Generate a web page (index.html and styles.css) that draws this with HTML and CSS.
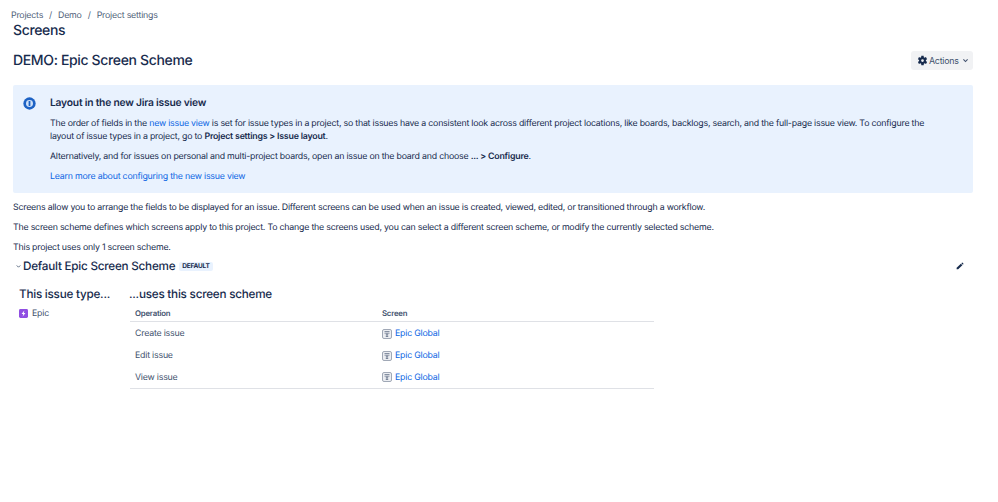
FILE: index.html
```html
<!DOCTYPE html>
<html lang="en">
<head>
<meta charset="utf-8">
<title>Screens</title>
<link rel="stylesheet" href="styles.css">
</head>
<body>
<nav class="crumbs"><span>Projects</span><i>/</i><span>Demo</span><i>/</i><span>Project settings</span></nav>
<main class="page">
  <h1 class="title">Screens</h1>
  <div class="head-row">
    <h2 class="scheme-title">DEMO: Epic Screen Scheme</h2>
    <button class="actions">
      <svg class="gear" viewBox="0 0 24 24"><path fill="#172b4d" fill-rule="evenodd" d="M19.4 13a7.6 7.6 0 0 0 0-2l2.6-2-2.500-4.400-3 1.200a7.300 7.300 0 0 0-1.700-1L14.500 1.500h-5L9 4.800a7.300 7.300 0 0 0-1.700 1l-3-1.200L2 9l2.600 2a7.600 7.600 0 0 0 0 2L2 15l2.300 4.400 3-1.200a7.300 7.300 0 0 0 1.700 1l.5 3.300h5l.5-3.300a7.300 7.300 0 0 0 1.700-1l3 1.200L22 15zM12 15a3 3 0 1 1 0-6 3 3 0 0 1 0 6z"/></svg>
      <span>Actions</span>
      <svg class="chev" viewBox="0 0 10 10"><path d="M2 3.500l3 3 3-3" fill="none" stroke="#42526e" stroke-width="1.600"/></svg>
    </button>
  </div>
  <section class="notice">
    <svg class="info" viewBox="0 0 16 16"><circle cx="8" cy="8" r="7.600" fill="#1d62c4"/><circle cx="8" cy="8" r="4.300" fill="#cfe1f8"/><rect x="6.900" y="4.800" width="2.200" height="6.400" rx=".8" fill="#1d62c4"/></svg>
    <div class="notice-body">
      <h3>Layout in the new Jira issue view</h3>
      <p>The order of fields in the <a href="#">new issue view</a> is set for issue types in a project, so that issues have a consistent look across different project locations, like boards, backlogs, search, and the full-page issue view. To configure the layout of issue types in a project, go to <b>Project settings &gt; Issue layout</b>.</p>
      <p>Alternatively, and for issues on personal and multi-project boards, open an issue on the board and choose <b>... &gt; Configure</b>.</p>
      <p><a href="#">Learn more about configuring the new issue view</a></p>
    </div>
  </section>
  <p class="para">Screens allow you to arrange the fields to be displayed for an issue. Different screens can be used when an issue is created, viewed, edited, or transitioned through a workflow.</p>
  <p class="para">The screen scheme defines which screens apply to this project. To change the screens used, you can select a different screen scheme, or modify the currently selected scheme.</p>
  <p class="para">This project uses only 1 screen scheme.</p>
  <div class="scheme-row">
    <svg class="toggle" viewBox="0 0 10 10"><path d="M2.500 3.500l2.500 2.500 2.500-2.500" fill="none" stroke="#42526e" stroke-width="1.200"/></svg>
    <h3 class="scheme-name">Default Epic Screen Scheme</h3>
    <span class="lozenge">DEFAULT</span>
    <svg class="pencil" viewBox="0 0 12 12"><path fill="#172b4d" d="M7.800 2.200l2 2-5.600 5.600-2 .0v-2z"/><path fill="#172b4d" d="M8.500 1.500l.6-.6a.7.7 0 0 1 1 0l1 1a.7.7 0 0 1 0 1l-.6.6z"/></svg>
  </div>
  <div class="columns">
    <div class="col-types">
      <h4>This issue type...</h4>
      <div class="type">
        <svg class="epic" viewBox="0 0 16 16"><rect width="16" height="16" rx="2.500" fill="#904ee2"/><path d="M9.500 2.500L4.500 9h3L6.500 13.500 11.500 7h-3z" fill="#fff"/></svg>
        <span>Epic</span>
      </div>
    </div>
    <div class="col-table">
      <h4>...uses this screen scheme</h4>
      <table>
        <thead><tr><th class="op">Operation</th><th>Screen</th></tr></thead>
        <tbody>
          <tr><td>Create issue</td><td><span class="screen"><svg class="scr" viewBox="0 0 12 12"><rect x=".6" y=".6" width="10.800" height="10.800" rx="1.800" fill="#eceef2" stroke="#97a0af" stroke-width="1.100"/><path d="M3 3h6M3 5h6M6 5v4.500M4.500 7h3M4.500 9h3" stroke="#626f86" stroke-width=".9"/></svg><a href="#">Epic Global</a></span></td></tr>
          <tr><td>Edit issue</td><td><span class="screen"><svg class="scr" viewBox="0 0 12 12"><rect x=".6" y=".6" width="10.800" height="10.800" rx="1.800" fill="#eceef2" stroke="#97a0af" stroke-width="1.100"/><path d="M3 3h6M3 5h6M6 5v4.500M4.500 7h3M4.500 9h3" stroke="#626f86" stroke-width=".9"/></svg><a href="#">Epic Global</a></span></td></tr>
          <tr><td>View issue</td><td><span class="screen"><svg class="scr" viewBox="0 0 12 12"><rect x=".6" y=".6" width="10.800" height="10.800" rx="1.800" fill="#eceef2" stroke="#97a0af" stroke-width="1.100"/><path d="M3 3h6M3 5h6M6 5v4.500M4.500 7h3M4.500 9h3" stroke="#626f86" stroke-width=".9"/></svg><a href="#">Epic Global</a></span></td></tr>
        </tbody>
      </table>
    </div>
  </div>
</main>
</body>
</html>
```
FILE: styles.css
```css
* { box-sizing: border-box; }
html, body { margin: 0; height: 100%; background: #fff; }
body { font-family: Inter, "Liberation Sans", sans-serif; font-size: 8.8px; letter-spacing: -0.024em; line-height: 13px; color: #172b4d; width: 998px; height: 502px; overflow: hidden; text-rendering: geometricPrecision; }
a { color: #0c66e4; text-decoration: none; }
h1, h2, h3, h4, p { margin: 0; }
.crumbs { display: flex; padding: 10px 0 0 11px; color: #505f79; font-size: 8.8px; line-height: 12px; }
.crumbs i { font-style: normal; margin: 0 6px; }
.page { padding: 0 25px 0 13px; }
.title { font-size: 14px; letter-spacing: -0.025em; line-height: 18px; font-weight: 500; }
.head-row { display: flex; justify-content: space-between; align-items: center; margin-top: 11px; height: 19px; }
.scheme-title { font-size: 14px; letter-spacing: -0.025em; font-weight: 500; line-height: 19px; }
.actions { display: flex; align-items: center; height: 19px; width: 62px; padding: 0 0 0 6px; border: 0; border-radius: 3px; background: #f1f2f4; font: inherit; letter-spacing: inherit; color: #42526e; }
.gear { width: 11px; height: 11px; margin-right: 1px; }
.chev { width: 7px; height: 7px; margin-left: 3px; }
.notice { display: flex; margin-top: 15px; height: 108px; background: #e9f2fe; border-radius: 2px; padding: 12px 0 0 10px; }
.info { width: 13px; height: 13px; flex: none; margin-right: 14px; }
.notice-body { flex: 1; padding-right: 27px; }
.notice-body h3 { font-weight: 600; line-height: 13px; }
.notice-body p { margin-top: 7px; }
.notice-body b { font-weight: 600; }
.para { margin-top: 7px; }
.notice + .para { margin-top: 8px; }
.scheme-row { display: flex; align-items: center; margin-top: 3px; height: 18px; }
.toggle { width: 7px; height: 7px; margin: 0 1px 0 2px; }
.scheme-name { font-size: 11.7px; letter-spacing: -0.02em; font-weight: 500; }
.lozenge { margin-left: 4px; background: #e9f2fe; color: #172b4d; font-size: 6.5px; font-weight: 700; padding: 0 3px; border-radius: 2px; line-height: 9px; }
.pencil { width: 9px; height: 9px; margin-left: auto; margin-right: 9px; }
.columns { display: flex; padding: 0 0 0 6px; margin-top: 11px; }
.col-types { width: 110px; }
.col-types h4, .col-table h4 { font-size: 11.7px; letter-spacing: -0.02em; font-weight: 500; line-height: 16px; }
.type { display: flex; align-items: center; gap: 4px; margin-top: 5px; color: #42526e; }
.epic { width: 9px; height: 9px; }
.col-table { flex: none; }
table { border-collapse: collapse; width: 524px; margin: 1px 0 0 1px; table-layout: fixed; }
th { text-align: left; font-size: 7.800px; font-weight: 600; color: #42526e; height: 18px; padding: 3px 0 0 5px; border-bottom: 1.5px solid #dfe1e6; }
th.op { width: 247px; }
td { height: 22px; padding: 1px 0 0 5px; color: #42526e; }
tbody tr:first-child td { height: 23px; padding-top: 2px; }
tbody tr:last-child td { border-bottom: 1px solid #dfe1e6; }
.screen { display: flex; align-items: center; gap: 3px; }
.scr { width: 10px; height: 10px; }
```
